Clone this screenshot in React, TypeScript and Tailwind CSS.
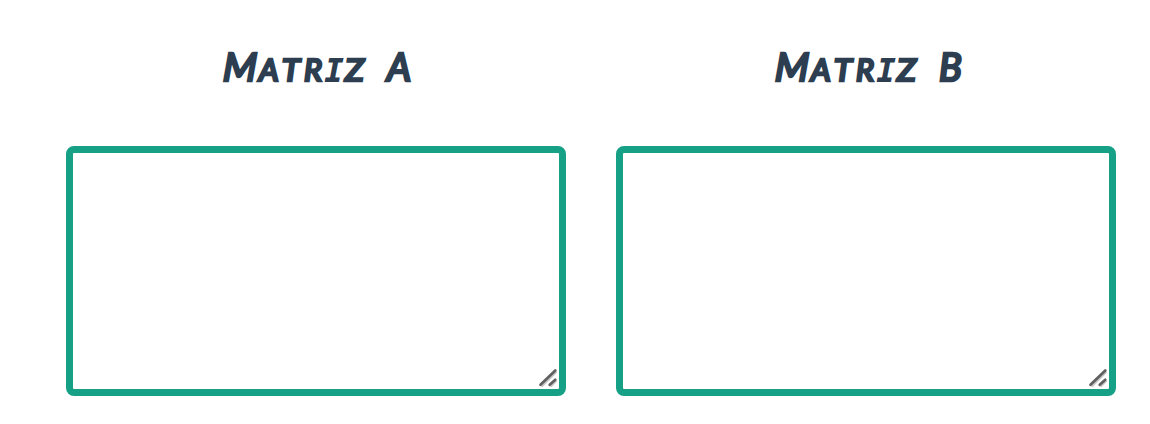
const ResizeGrip = () => (
  <svg className="pointer-events-none absolute right-[7px] bottom-[7px]" width="22" height="22" viewBox="0 0 22 22" fill="none" strokeLinecap="round">
    <path d="M5.2 19 19 5.2M14.2 19l4.8-4.6" stroke="#c8c8c8" strokeWidth="2" />
    <path d="M3.5 17.8 18.3 3.5M12.7 17.8l5.6-5" stroke="#606060" strokeWidth="2.7" />
  </svg>
);

const Matrix = ({ name, indent }: { name: string; indent: string }) => (
  <section className="flex w-[500px] flex-col">
    <h2 className={`flex h-[146px] items-baseline pt-[40px] ${indent} font-[Lato,sans-serif] text-[33px] leading-[52px] font-normal whitespace-nowrap text-[#2c3e50] italic [-webkit-text-stroke:2.7px_#2c3e50]`}>
      <span className="w-[37px] origin-bottom -skew-x-3 text-[39px]">M</span>
      <span className="w-[23px] text-[31px]">A</span>
      <span className="w-[22px] origin-left scale-x-105 text-[31px]">T</span>
      <span className="w-[21px] text-[31px]">R</span>
      <span className="w-[20px] font-['DejaVu_Sans_Mono',monospace] text-[30px] [-webkit-text-stroke-width:2px]">I</span>
      <span className="w-[42px] origin-left scale-x-110 text-[31px]">Z</span>
      <span className="text-[38px]">{name}</span>
    </h2>
    <div className="relative h-[250px]">
      <textarea aria-label={`Matriz ${name}`} className="block h-full w-full resize-none rounded-[8px] border-[7px] border-[#16a085] bg-white outline-none" />
      <ResizeGrip />
    </div>
  </section>
);

export default function App() {
  return (
    <main className="flex h-[424px] gap-[50px] overflow-hidden bg-white pl-[66px]">
      <Matrix name="A" indent="pl-[156px]" />
      <Matrix name="B" indent="pl-[158px]" />
    </main>
  );
}
